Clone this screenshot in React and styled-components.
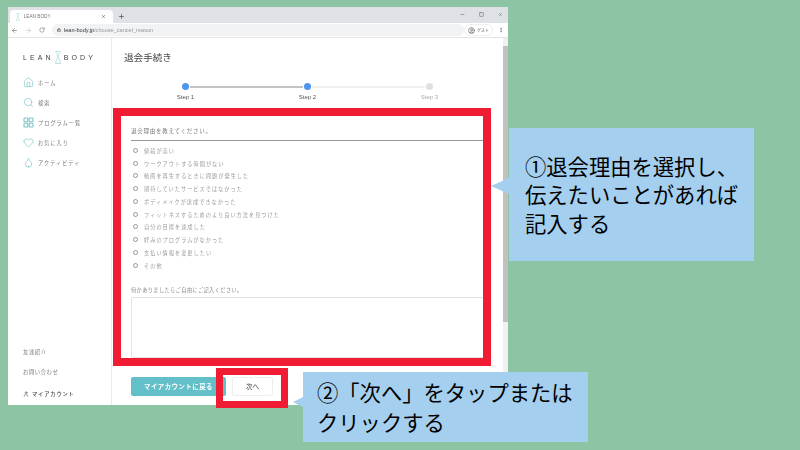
import React from "react";
import styled, { createGlobalStyle } from "styled-components";
import { Home, Search, Heart, Droplet, ArrowLeft, ArrowRight, RotateCw, Lock, X, Plus, Minus, Square, UserCircle, MoreVertical, User } from "lucide-react";

const Global = createGlobalStyle`
  html, body { margin: 0; padding: 0; background: #8dc4a4; }
  * { box-sizing: border-box; }
`;
const jp = `"Noto Sans CJK JP", "Noto Sans", sans-serif`;

const Stage = styled.div`
  position: relative; width: 800px; height: 450px; overflow: hidden;
  background: #8dc4a4; padding: 7px 0 0 8px; font-family: ${jp};
`;
const Browser = styled.div`
  width: 500px; height: 398px; background: #fff; display: flex; flex-direction: column;
  filter: blur(0.4px); overflow: hidden;
`;
const TabBar = styled.div`
  height: 16px; background: #dee1e6; display: flex; align-items: flex-end; padding-left: 2px; color: #444; flex: none;
`;
const Tab = styled.div`
  width: 103px; height: 13px; background: #fff; border-radius: 4px 4px 0 0; display: flex; align-items: center;
  padding: 0 7px 0 6px; font: 4.7px "Liberation Sans", sans-serif; color: #777;
  svg:last-child { color: #333; }
`;
const TabTitle = styled.span` margin-left: 4px; flex: 1; `;
const NewTab = styled.div` width: 14px; height: 13px; margin-left: 1px; display: flex; align-items: center; justify-content: center; color: #333; `;
const WindowControls = styled.div` margin-left: auto; height: 16px; display: flex; align-items: center; gap: 14px; padding: 0 5px 2px 0; color: #444; `;
const AddressBar = styled.div`
  height: 15px; background: #fff; border-bottom: 1px solid #e4e4e4; display: flex; align-items: center; padding: 0 4px 0 3px; flex: none; color: #666;
`;
const NavIcons = styled.div` display: flex; width: 39px; gap: 7px; align-items: center; flex: none; `;
const Omnibox = styled.div`
  margin-left: 2px; width: 412px; flex: none; height: 12px; border-radius: 6px; background: #f1f3f4; display: flex; align-items: center; padding-left: 5px; gap: 3px;
  font: 5.6px "Liberation Sans", sans-serif; color: #999;
  b { font-weight: 400; color: #333; }
  svg { color: #444; }
`;
const Guest = styled.div`
  width: 29px; height: 12px; border: 1px solid #eee; border-radius: 6px; display: flex; align-items: center; gap: 2px; padding-left: 3px; font-size: 4px; color: #555; flex: none; white-space: nowrap;
`;
const Kebab = styled.div` margin-left: 5px; display: flex; color: #555; `;
const Body = styled.div` flex: 1; display: flex; min-height: 0; `;
const Sidebar = styled.aside`
  width: 104px; flex: none; border-right: 1px solid #eaeaea; display: flex; flex-direction: column; padding: 13px 0 0 15px;
`;
const Logo = styled.div`
  display: flex; align-items: center; font: 7px "Liberation Sans", sans-serif; letter-spacing: 3.1px; color: #444; height: 12px; white-space: nowrap;
  svg { margin: 0 3px 0 1px; flex: none; }
`;
const NavList = styled.nav` margin-top: 9px; display: flex; flex-direction: column; `;
const NavItem = styled.div`
  height: 20.2px; display: flex; align-items: center; gap: 4px; font-size: 5.2px; letter-spacing: 1px; color: #777;
  svg { color: #7cc4c8; flex: none; width: 11px; height: 11px; }
`;
const SideFoot = styled.div` margin-top: auto; display: flex; flex-direction: column; padding-bottom: 1px; `;
const FootLink = styled.div`
  height: 20px; margin-top: ${p => p.$dark ? 2 : 0}px; display: flex; align-items: center; gap: 3px; font-size: 5.3px;
  letter-spacing: ${p => p.$dark ? 0.8 : 0.6}px; color: ${p => p.$dark ? "#444" : "#777"}; font-weight: ${p => p.$dark ? 500 : 400};
`;
const Main = styled.main` flex: 1; display: flex; flex-direction: column; min-width: 0; overflow: hidden; padding-left: 12px; `;
const Title = styled.h1` margin: 12px 0 0; font-size: 9.6px; line-height: 14px; font-weight: 400; color: #444; `;
const Stepper = styled.div`
  margin: 19px 0 0 58px; display: grid; grid-template-columns: 7px 115px 7px 115px 7px; row-gap: 3px; align-items: center;
`;
const Dot = styled.i` width: 7px; height: 7px; border-radius: 50%; background: ${p => p.$on ? "#4f94ef" : "#e0e0e0"}; `;
const Rail = styled.i` height: 2px; margin: 0 1px; background: ${p => p.$on ? "#c4c4c4" : "#f0f0f0"}; `;
const StepLabel = styled.span`
  grid-column: ${p => p.$col}; justify-self: center; white-space: nowrap; font: 6px/8px "Liberation Sans", sans-serif; color: ${p => p.$off ? "#aaa" : "#555"};
`;
const Form = styled.section` margin: 25px 0 0 7px; display: flex; flex-direction: column; `;
const Question = styled.div`
  font-size: 5.5px; letter-spacing: .75px; line-height: 10px; height: 15px; border-bottom: 1px solid #999; color: #777; width: 353px;
`;
const Reasons = styled.div` margin-top: 3px; display: flex; flex-direction: column; `;
const Reason = styled.label`
  height: 12.75px; display: flex; align-items: center; gap: 6px; font-size: 5.2px; letter-spacing: 1px; color: #999; white-space: nowrap;
`;
const Radio = styled.i` width: 5px; height: 5px; border: 1px solid #999; border-radius: 50%; margin-left: 2px; flex: none; `;
const Hint = styled.div` margin-top: 14px; font-size: 5.2px; line-height: 8px; letter-spacing: .4px; color: #888; `;
const TextBox = styled.div` margin-top: 3px; height: 61px; width: 353px; border: 1px solid #e2e2e2; border-radius: 2px; `;
const Actions = styled.div` margin-top: 19px; display: flex; gap: 6px; `;
const BackButton = styled.div`
  width: 95px; height: 19px; border-radius: 2px; background: #64c0c8; color: #fff; font-size: 6.4px; font-weight: 700; letter-spacing: .5px;
  display: flex; align-items: center; justify-content: center;
`;
const NextButton = styled.div`
  width: 41px; height: 19px; border: 1px solid #eee; border-radius: 2px; background: #fff; color: #333; font-size: 6.5px;
  display: flex; align-items: center; justify-content: center;
`;
const ScrollTrack = styled.div` width: 5px; flex: none; background: #f1f1f1; display: flex; flex-direction: column; `;
const ScrollArrow = styled.div` height: 8px; flex: none; `;
const ScrollThumb = styled.div` height: 276px; background: #c1c1c1; `;
const Highlight = styled.div`
  position: absolute; left: ${p => p.$x}px; top: ${p => p.$y}px; width: ${p => p.$w}px; height: ${p => p.$h}px;
  border: ${p => p.$b}px solid #ef1c34;
`;
const Callout = styled.div`
  position: absolute; left: ${p => p.$x}px; top: ${p => p.$y}px; width: ${p => p.$w}px; height: ${p => p.$h}px;
  background: #a5cfef; color: #000; font-size: 21.3px; font-weight: 400; padding-left: ${p => p.$pad}px;
  display: flex; flex-direction: column; justify-content: center; line-height: ${p => p.$lh}px; white-space: nowrap;
  &::before {
    content: ""; position: absolute; left: -${p => p.$tip}px; top: ${p => p.$tipY}px;
    border-style: solid; border-color: transparent #a5cfef transparent transparent;
    border-width: ${p => p.$tipH}px ${p => p.$tip}px ${p => p.$tipH}px 0;
  }
`;

const Hourglass = ({ h = 13 }) => (
  <svg width={h * 7 / 15} height={h} viewBox="0 0 7 15" fill="none" stroke="#8fcfd2" strokeWidth=".7">
    <path d="M.5.5h6M.5 14.500h6M1 .5c0 3 5 4 2.500 7C1 10.500 1 12 1 14.500M6 .5c0 3-5 4-2.500 7C6 10.500 6 12 6 14.500" />
  </svg>
);
const Grid = () => (
  <svg viewBox="-.5 -.5 11 11" fill="none" stroke="currentColor" strokeWidth="1.1">
    <rect x=".5" y=".5" width="3.8" height="3.8" rx=".8" /><rect x="5.700" y=".5" width="3.8" height="3.8" rx=".8" />
    <rect x=".5" y="5.700" width="3.8" height="3.8" rx=".8" /><rect x="5.700" y="5.700" width="3.8" height="3.8" rx=".8" />
  </svg>
);

const reasons = ["値段が高い","ワークアウトする時間がない","動画を再生するときに問題が発生した","期待していたサービスではなかった","ボディメイクが達成できなかった","フィットネスするためのより良い方法を見つけた","自分の目標を達成した","好みのプログラムがなかった","支払い情報を変更したい","その他"];
const nav = [[Home,"ホーム"],[Search,"検索"],[Grid,"プログラム一覧"],[Heart,"お気に入り"],[Droplet,"アクティビティ"]];

export default function App() {
  return (
    <Stage>
      <Global />
      <Browser>
        <TabBar>
          <Tab><Hourglass h={8} /><TabTitle>LEAN BODY</TabTitle><X size={5} strokeWidth={2} /></Tab>
          <NewTab><Plus size={7} strokeWidth={2} /></NewTab>
          <WindowControls><Minus size={5} strokeWidth={2} /><Square size={5} strokeWidth={2} /><X size={5} strokeWidth={1.500} /></WindowControls>
        </TabBar>
        <AddressBar>
          <NavIcons><ArrowLeft size={7} /><ArrowRight size={7} color="#bbb" /><RotateCw size={6} /></NavIcons>
          <Omnibox><Lock size={4} strokeWidth={3} /><span><b>lean-body.jp</b>/choose_cancel_reason</span></Omnibox>
          <Guest><UserCircle size={7} /><span>ゲスト</span></Guest>
          <Kebab><MoreVertical size={6} /></Kebab>
        </AddressBar>
        <Body>
          <Sidebar>
            <Logo>LEAN<Hourglass />BODY</Logo>
            <NavList>
              {nav.map(([I, t]) => <NavItem key={t}><I strokeWidth={1.500} />{t}</NavItem>)}
            </NavList>
            <SideFoot>
              <FootLink>友達紹介</FootLink>
              <FootLink>お問い合わせ</FootLink>
              <FootLink $dark><User size={6} />マイアカウント</FootLink>
            </SideFoot>
          </Sidebar>
          <Main>
            <Title>退会手続き</Title>
            <Stepper>
              <Dot $on /><Rail $on /><Dot $on /><Rail /><Dot />
              <StepLabel $col={1}>Step 1</StepLabel>
              <StepLabel $col={3}>Step 2</StepLabel>
              <StepLabel $col={5} $off>Step 3</StepLabel>
            </Stepper>
            <Form>
              <Question>退会理由を教えてください。</Question>
              <Reasons>
                {reasons.map(r => <Reason key={r}><Radio />{r}</Reason>)}
              </Reasons>
              <Hint>何かありましたらご自由にご記入ください。</Hint>
              <TextBox />
              <Actions>
                <BackButton>マイアカウントに戻る</BackButton>
                <NextButton>次へ</NextButton>
              </Actions>
            </Form>
          </Main>
          <ScrollTrack><ScrollArrow /><ScrollThumb /></ScrollTrack>
        </Body>
      </Browser>
      <Highlight $x={113} $y={108} $w={378} $h={258} $b={8} />
      <Highlight $x={216} $y={368} $w={72} $h={40} $b={7} />
      <Callout $x={509} $y={128} $w={245} $h={133} $pad={16} $lh={28.5} $tip={18} $tipH={8} $tipY={50}>
        <span>①退会理由を選択し、</span><span>伝えたいことがあれば</span><span>記入する</span>
      </Callout>
      <Callout $x={303} $y={372} $w={285} $h={70} $pad={14} $lh={30} $tip={10} $tipH={5} $tipY={25}>
        <span>②「次へ」をタップまたは</span><span>クリックする</span>
      </Callout>
    </Stage>
  );
}
